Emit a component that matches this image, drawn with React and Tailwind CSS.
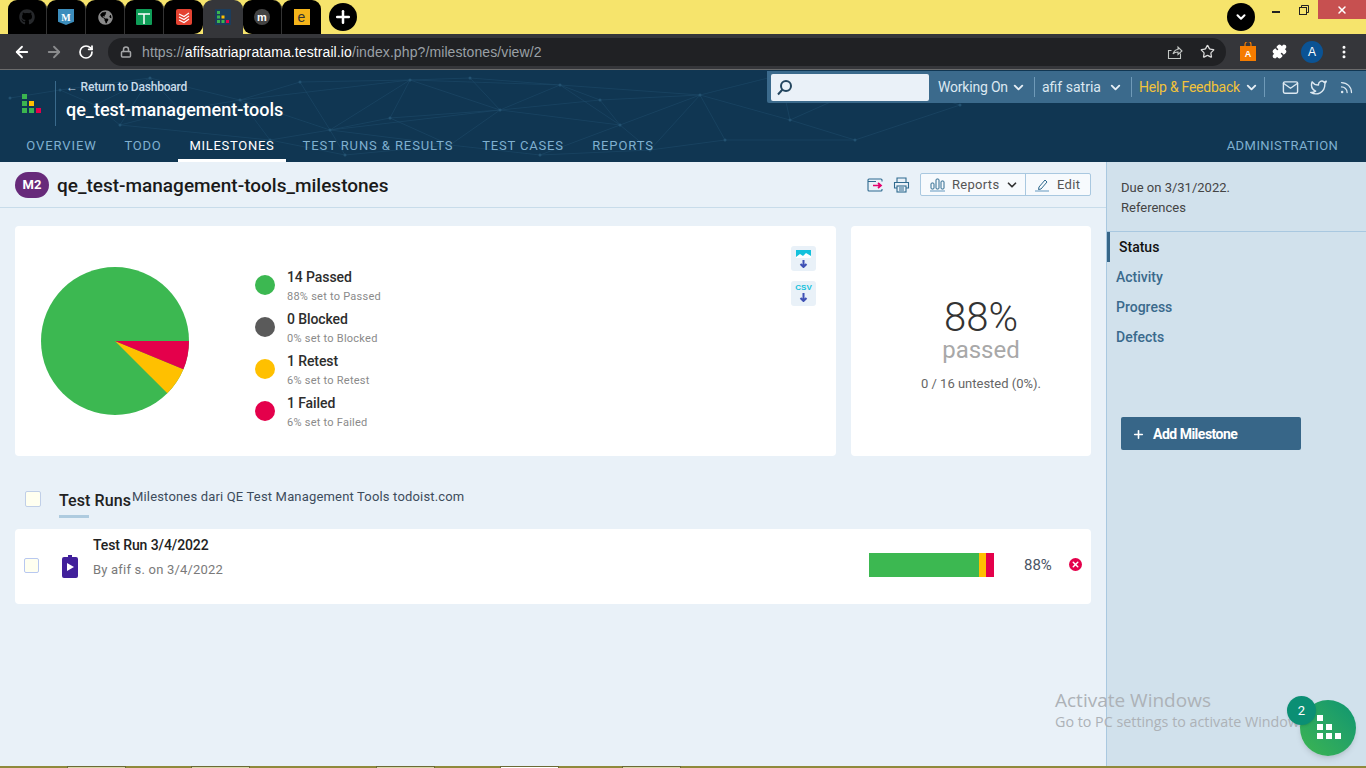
import React from "react";
import { ArrowLeft, ArrowRight, RotateCw, Lock, Star, MoreVertical, ChevronDown, Plus, X, Puzzle } from "lucide-react";
import { FaGithub, FaGlobeAmericas } from "react-icons/fa";
import { FiMail, FiTwitter, FiRss } from "react-icons/fi";

const font = "font-['Roboto',sans-serif]";

function TabShell({ children, className = "" }) {
  return <div className={`w-[39px] h-[34px] shrink-0 bg-black rounded-t-[9px] flex items-center justify-center ${className}`}>{children}</div>;
}

function TabStrip() {
  return (
    <div className="h-[34px] bg-[#f6e46c] flex items-center shrink-0">
      <div className="ml-[8px] flex h-[34px] shrink-0">
        <TabShell className="border-r border-[#333]"><FaGithub className="text-[#26282b]" size={16} /></TabShell>
        <TabShell className="border-r border-[#333]">
          <div className="w-[16px] h-[16px] bg-[#3c8dbc] [clip-path:polygon(0_0,100%_0,100%_80%,50%_100%,0_80%)] flex items-center justify-center text-white text-[10px] font-bold font-['Liberation_Serif',serif]">M</div>
        </TabShell>
        <TabShell className="border-r border-[#333]"><FaGlobeAmericas className="text-[#8a8a8a]" size={15} /></TabShell>
        <TabShell className="border-r border-[#333]">
          <svg width="16" height="16" viewBox="0 0 16 16"><rect width="16" height="16" rx="1" fill="#0f9d58" /><path d="M2 5h12M8 5v10" stroke="#fff" strokeWidth="1.5" /></svg>
        </TabShell>
        <TabShell className="rounded-br-[9px]">
          <svg width="16" height="16" viewBox="0 0 16 16"><rect width="16" height="16" rx="2" fill="#e44332" /><path d="M3 5l5 2.5L13 4M3 8l5 2.5L13 7M3 11l5 2.5L13 10" stroke="#fff" strokeWidth="1.1" fill="none" /></svg>
        </TabShell>
        <div className="w-[40px] h-[34px] shrink-0 bg-[#35363a] rounded-t-[9px] flex items-center justify-center">
          <svg width="16" height="16" viewBox="0 0 16 16"><rect width="16" height="16" fill="#1c3d5c" /><g fill="#3bb54f"><rect x="2" y="2" width="3" height="3" /><rect x="2" y="6.5" width="3" height="3" /><rect x="2" y="11" width="3" height="3" /><rect x="6.5" y="11" width="3" height="3" /></g><rect x="6.5" y="6.5" width="3" height="3" fill="#ffc000" /><rect x="11" y="11" width="3" height="3" fill="#e4004b" /></svg>
        </div>
        <TabShell className="rounded-bl-[9px] border-r border-[#333]">
          <div className="w-[16px] h-[16px] rounded-full bg-[#444] flex items-center justify-center text-white text-[11px] leading-none font-bold font-['Liberation_Sans',sans-serif]">m</div>
        </TabShell>
        <TabShell>
          <div className="w-[16px] h-[16px] bg-[#f4b41a] flex items-center justify-center text-[#333] text-[14px] leading-none font-['Liberation_Sans',sans-serif]">e</div>
        </TabShell>
      </div>
      <div className="ml-[8px] w-[28px] h-[28px] shrink-0 rounded-full bg-black flex items-center justify-center"><Plus size={20} strokeWidth={3} className="text-white" /></div>
      <div className="ml-[870px] w-[28px] h-[28px] shrink-0 rounded-full bg-black flex items-center justify-center"><ChevronDown size={14} strokeWidth={3.5} className="text-white" /></div>
      <div className="ml-[17px] w-[8px] h-[2px] shrink-0 mb-[10px] bg-[#222]" />
      <svg className="ml-[19px] mb-[14px] shrink-0" width="10" height="10" viewBox="0 0 10 10" fill="none" stroke="#222" strokeWidth="1"><rect x="0.5" y="2.5" width="7" height="7" /><path d="M2.5 2.5v-2h7v7h-2" /></svg>
      <div className="ml-[9px] self-start w-[48px] h-[19px] shrink-0 bg-[#c75050] flex items-center justify-center"><X size={12} strokeWidth={3} className="text-white" /></div>
    </div>
  );
}

function Toolbar() {
  return (
    <div className="h-[36px] bg-[#35363a] border-b border-[#6b6b6b] flex items-center shrink-0">
      <ArrowLeft size={18} strokeWidth={2.4} className="ml-[13px] text-white" />
      <ArrowRight size={18} strokeWidth={2.4} className="ml-[14px] text-[#8a8b8d]" />
      <RotateCw size={16} strokeWidth={2.6} className="ml-[15px] text-white" />
      <div className="ml-[14px] w-[1118px] h-[28px] rounded-full bg-[#202124] flex items-center">
        <Lock size={12} strokeWidth={3} className="ml-[12px] text-[#a5a6a8]" />
        <div className="ml-[10px] mt-[1px] text-[14px] tracking-[0.1px] text-[#9aa0a6] font-['Liberation_Sans',sans-serif]">https://<span className="text-white">afifsatriapratama.testrail.io</span>/index.php?/milestones/view/2</div>
        <svg className="ml-auto" width="16" height="16" viewBox="0 0 16 16" fill="none" stroke="#c4c7c5" strokeWidth="1.1"><path d="M13.5 9.5v5h-12v-8h3M6 10c1-3 3-4.5 5-4.5V3l4 4-4 3.5V8c-2 0-4 .6-5 2z" /></svg>
        <Star size={15} strokeWidth={2} className="ml-[17px] mr-[11px] text-[#dcdcdc]" />
      </div>
      <svg className="ml-[14px]" width="16" height="19" viewBox="0 0 16 19"><path d="M5 4V2.5a3 3 0 0 1 6 0V4" stroke="#f57c00" strokeWidth="1.2" fill="none" /><rect y="4" width="16" height="15" fill="#f57c00" /><text x="8" y="15" fontSize="9" fontWeight="700" fill="#fff" textAnchor="middle" fontFamily="Liberation Sans, sans-serif">A</text></svg>
      <Puzzle size={15} fill="#fff" className="ml-[16px] text-white" />
      <div className="ml-[14px] w-[22px] h-[22px] rounded-full bg-[#0b5394] flex items-center justify-center text-white text-[12px] font-['Liberation_Sans',sans-serif]">A</div>
      <MoreVertical size={16} strokeWidth={2.5} className="ml-[13px] text-white" />
    </div>
  );
}

const pts = [[10,28],[60,20],[150,8],[240,30],[330,60],[410,10],[500,40],[560,15],[620,55],[700,25],[790,50],[880,10],[960,35],[270,70],[120,55],[450,75],[650,80],[780,5],[345,85],[540,85],[855,70],[725,70],[180,40],[300,12],[390,48],[470,8],[600,30],[95,35]];
const links = [[0,1],[1,2],[2,3],[3,4],[4,5],[5,6],[6,7],[7,8],[8,9],[9,10],[10,11],[11,12],[3,13],[13,4],[2,14],[14,13],[4,15],[15,6],[6,8],[8,16],[16,9],[9,17],[17,10],[4,18],[18,15],[15,19],[19,8],[10,20],[20,12],[9,21],[21,16],[3,5],[5,7],[7,9],[4,6],[18,13],[19,16],[21,20],[22,2],[22,3],[22,14],[23,3],[23,5],[23,4],[24,4],[24,5],[24,6],[24,15],[25,5],[25,7],[25,6],[26,7],[26,8],[26,9],[26,6],[27,1],[27,14],[27,2]];

function Network() {
  return (
    <svg className="absolute inset-0 pointer-events-none" width="1366" height="92">
      {links.map(([a, b], i) => (
        <line key={i} x1={pts[a][0]} y1={pts[a][1]} x2={pts[b][0]} y2={pts[b][1]} stroke="#1f4d6c" strokeWidth="0.8" opacity="0.65" />
      ))}
      {pts.map(([x, y], i) => <circle key={i} cx={x} cy={y} r="1.5" fill="#235271" />)}
    </svg>
  );
}

function TopBar() {
  return (
    <div className="relative mt-[1px] w-[599px] h-[32px] bg-[#3b6a8c] rounded-bl-[2px] flex items-center text-[14px]">
      <div className="ml-[4px] w-[158px] h-[27px] bg-[#eaf1f8] rounded-[2px] flex items-center">
        <svg className="ml-[5px]" width="17" height="17" viewBox="0 0 17 17" fill="none" stroke="#24465f" strokeWidth="2"><circle cx="10" cy="7" r="5" /><path d="M6.5 10.5L2 15.5" /></svg>
      </div>
      <span className="ml-[9px] w-[70px] text-[#dce8f1] whitespace-nowrap -tracking-[0.2px]">Working On</span>
      <ChevronDown size={15} strokeWidth={3} className="ml-[3px] text-[#e6eef5]" />
      <div className="ml-[8px] w-px h-[20px] bg-[#6f9ab8]" />
      <span className="ml-[7px] w-[59px] text-[#dce8f1] whitespace-nowrap">afif satria</span>
      <ChevronDown size={15} strokeWidth={3} className="ml-[7px] text-[#e6eef5]" />
      <div className="ml-[8px] w-px h-[20px] bg-[#6f9ab8]" />
      <span className="ml-[7px] w-[102px] text-[#f2c33a] whitespace-nowrap -tracking-[0.25px]">Help &amp; Feedback</span>
      <ChevronDown size={15} strokeWidth={3} className="ml-[3px] text-[#e6eef5]" />
      <div className="ml-[5px] w-px h-[20px] bg-[#6f9ab8]" />
      <FiMail size={17} className="ml-[17px] text-[#dce8f1]" />
      <FiTwitter size={17} className="ml-[11px] text-[#dce8f1]" />
      <FiRss size={15} className="ml-[12px] text-[#dce8f1]" />
    </div>
  );
}

function NavTab({ children, className = "", active }) {
  return (
    <div className={`h-[32px] flex items-center justify-center whitespace-nowrap uppercase text-[13px] ${active ? "text-white border-b-[3px] border-white pt-[3px]" : "text-[#7fb0d0]"} ${className}`}>{children}</div>
  );
}

function Header() {
  return (
    <div className="relative h-[92px] bg-[#103652] flex flex-col shrink-0">
      <Network />
      <div className="relative h-[60px] flex items-start justify-between">
        <div className="flex items-start">
          <div className="ml-[22px] mt-[24px] grid grid-cols-3 gap-[2px] w-[19px]">
            <i className="w-[5px] h-[5px] bg-[#3bb54f]" /><i /><i />
            <i className="w-[5px] h-[5px] bg-[#3bb54f]" /><i className="w-[5px] h-[5px] bg-[#ffc000]" /><i />
            <i className="w-[5px] h-[5px] bg-[#3bb54f]" /><i className="w-[5px] h-[5px] bg-[#3bb54f]" /><i className="w-[5px] h-[5px] bg-[#e4004b]" />
          </div>
          <div className="ml-[14px] mt-[11px] w-px h-[45px] bg-[#3a6a8c]" />
          <div className="ml-[10px] mt-[9px]">
            <div className="text-[12px] leading-[16px] font-medium text-[#c9dcea] -tracking-[0.2px]">← Return to Dashboard</div>
            <div className="mt-[3px] text-[18px] leading-[24px] font-medium text-white whitespace-nowrap">qe_test-management-tools</div>
          </div>
        </div>
        <TopBar />
      </div>
      <div className="relative h-[32px] flex items-start pl-[15px]">
        <NavTab className="w-[93px] tracking-[0.9px]">Overview</NavTab>
        <NavTab className="ml-[6px] w-[58px] tracking-[0.7px]">Todo</NavTab>
        <NavTab className="ml-[6px] w-[108px] tracking-[0.7px]" active>Milestones</NavTab>
        <NavTab className="ml-[5px] w-[174px] tracking-[0.9px]">Test Runs &amp; Results</NavTab>
        <NavTab className="ml-[6px] w-[104px] tracking-[0.8px]">Test Cases</NavTab>
        <NavTab className="ml-[6px] w-[84px] tracking-[0.9px]">Reports</NavTab>
        <NavTab className="ml-auto mr-[28px] w-[111px] tracking-[0.45px]">Administration</NavTab>
      </div>
    </div>
  );
}

function PageTitle() {
  return (
    <div className="h-[46px] border-b border-[#c8dcea] flex items-center pl-[15px] pr-[15px]">
      <div className="w-[34px] h-[26px] rounded-[13px] bg-[#672a7a] text-white text-[13px] font-bold flex items-center justify-center">M2</div>
      <div className="ml-[8px] pt-[3px] text-[19px] font-medium text-[#1a1a1a] whitespace-nowrap">qe_test-management-tools_milestones</div>
      <svg className="ml-auto" width="16" height="14" viewBox="0 0 16 14" fill="none"><path d="M15 3.5V2a1 1 0 0 0-1-1H2a1 1 0 0 0-1 1v10a1 1 0 0 0 1 1h12a1 1 0 0 0 1-1v-1" stroke="#2f6a8f" strokeWidth="1.1" /><path d="M1 3.5h8" stroke="#2f6a8f" strokeWidth="1" /><path d="M6 7.5h8M11 5l3 2.5L11 10" stroke="#e4006e" strokeWidth="1.7" /></svg>
      <svg className="ml-[10px]" width="17" height="16" viewBox="0 0 17 16" fill="none" stroke="#2f6a8f" strokeWidth="1.1"><path d="M4 5V1h9v4M4 11H1.5V5.5h14V11H13" /><rect x="4" y="9" width="9" height="6" /><path d="M6 11h5M6 13h5" /></svg>
      <div className="ml-[10px] h-[23px] w-[171px] bg-[#f7fafd] border border-[#a9c8e0] rounded-[2px] flex items-center text-[13px] text-[#555] tracking-[0.3px]">
        <div className="w-[105px] h-full border-r border-[#a9c8e0] flex items-center">
          <svg className="ml-[9px]" width="15" height="14" viewBox="0 0 15 14" fill="none" stroke="#2f6a8f" strokeWidth="1"><rect x="1" y="5" width="3" height="6" rx="1" /><rect x="6" y="1" width="3" height="10" rx="1" /><rect x="11" y="3" width="3" height="8" rx="1" /><path d="M0 13h15" stroke="#8db4d0" strokeWidth="1.4" /></svg>
          <span className="ml-[7px]">Reports</span>
          <ChevronDown size={14} strokeWidth={3} className="ml-[6px] text-[#333]" />
        </div>
        <svg className="ml-[9px]" width="14" height="14" viewBox="0 0 14 14" fill="none" stroke="#2f6a8f" strokeWidth="1"><path d="M4 9l6-7 2 2-6 7-2.5.5z" /><path d="M0 13h14" stroke="#8db4d0" strokeWidth="1.4" /></svg>
        <span className="ml-[8px]">Edit</span>
      </div>
    </div>
  );
}

function Pie() {
  return (
    <svg className="ml-[26px] shrink-0" width="148" height="148" viewBox="-74 -74 148 148">
      <circle r="74" fill="#3cb851" />
      <path d="M0 0L68.4 28.3A74 74 0 0 1 52.3 52.3Z" fill="#ffc000" />
      <path d="M0 0L74 0A74 74 0 0 1 68.4 28.3Z" fill="#e4004b" />
    </svg>
  );
}

function Legend({ color, title, sub }) {
  return (
    <div className="h-[42px] flex items-center">
      <div className={`w-[20px] h-[20px] rounded-full ${color}`} />
      <div className="ml-[12px] pt-[1px]">
        <div className="text-[14px] leading-[20px] font-medium text-[#2d2d2d] -tracking-[0.1px] mb-[2px]">{title}</div>
        <div className="text-[11px] leading-[16px] text-[#8a8a8a] tracking-[0.25px]">{sub}</div>
      </div>
    </div>
  );
}

function Cards() {
  return (
    <div className="mt-[18px] mx-[15px] h-[230px] flex gap-[15px]">
      <div className="relative w-[821px] bg-white rounded-[4px] flex items-center">
        <Pie />
        <div className="ml-[66px] self-start mt-[38px]">
          <Legend color="bg-[#3cb851]" title="14 Passed" sub="88% set to Passed" />
          <Legend color="bg-[#5a5a5a]" title="0 Blocked" sub="0% set to Blocked" />
          <Legend color="bg-[#ffc000]" title="1 Retest" sub="6% set to Retest" />
          <Legend color="bg-[#e4004b]" title="1 Failed" sub="6% set to Failed" />
        </div>
        <div className="ml-auto mr-[20px] self-start mt-[20px] flex flex-col gap-[10px]">
          <div className="w-[25px] h-[25px] bg-[#e9f1f8] rounded-[3px] flex flex-col items-center pt-[4px]">
            <svg width="15" height="18" viewBox="0 0 15 18"><rect width="15" height="8" fill="#14c1dc" /><path d="M0 7l4-3 3 2 3-3 5 3v2H0z" fill="#fff" /><path d="M7.5 10v7M4.5 14l3 3 3-3" stroke="#3f51b5" strokeWidth="2" fill="none" /></svg>
          </div>
          <div className="w-[25px] h-[25px] bg-[#e9f1f8] rounded-[3px] flex flex-col items-center pt-[2px]">
            <span className="text-[8px] leading-[10px] font-bold text-[#14c1dc] font-['Liberation_Sans',sans-serif]">CSV</span>
            <svg width="15" height="9" viewBox="0 0 15 9"><path d="M7.5 0v8M4.5 5l3 3 3-3" stroke="#3f51b5" strokeWidth="2" fill="none" /></svg>
          </div>
        </div>
      </div>
      <div className="w-[240px] bg-white rounded-[4px] flex flex-col items-center pl-[20px] pt-[74px]">
        <div className="text-[40px] leading-[36px] font-light text-[#333]">88%</div>
        <div className="text-[24px] leading-[28px] text-[#a8a8a8]">passed</div>
        <div className="text-[13px] leading-[20px] text-[#666] mt-[10px]">0 / 16 untested (0%).</div>
      </div>
    </div>
  );
}

function RunsHeader() {
  return (
    <div className="h-[73px] ml-[25px] pt-[30px] flex items-start">
      <div className="mt-[5px] w-[16px] h-[16px] bg-[#fffff0] border border-[#c0cfe8] rounded-[2px]" />
      <div className="ml-[18px] pt-[3px] w-[73px]">
        <div className="text-[16px] leading-[24px] font-medium text-[#222] whitespace-nowrap tracking-[0.1px]">Test Runs</div>
        <div className="mt-[2px] w-[30px] h-[3px] bg-[#aecbdf]" />
      </div>
      <div className="mt-[1px] text-[13px] leading-[20px] text-[#3d4c5c] whitespace-nowrap tracking-[0.17px]">Milestones dari QE Test Management Tools todoist.com</div>
    </div>
  );
}

function RunRow() {
  return (
    <div className="mx-[15px] h-[75px] bg-white rounded-[4px] flex">
      <div className="ml-[9px] mt-[29px] w-[15px] h-[15px] bg-[#fffff0] border border-[#b8c8f0] rounded-[2px]" />
      <svg className="ml-[23px] mt-[26px]" width="16" height="23" viewBox="0 0 16 23"><path d="M4 2h2V0h4v2h2l0 0h2a2 2 0 0 1 2 2v17a2 2 0 0 1-2 2H2a2 2 0 0 1-2-2V4a2 2 0 0 1 2-2z" fill="#41209b" /><path d="M5 8l7 4-7 4z" fill="#fff" /></svg>
      <div className="ml-[15px] pt-[6px]">
        <div className="text-[14px] leading-[20px] font-medium text-[#222] -tracking-[0.1px]">Test Run 3/4/2022</div>
        <div className="mt-[5px] text-[13px] leading-[20px] text-[#7a7a7a] tracking-[0.2px]">By afif s. on 3/4/2022</div>
      </div>
      <div className="ml-auto mt-[24px] w-[125px] h-[24px] flex">
        <div className="w-[110px] bg-[#3cb851]" />
        <div className="w-[7px] bg-[#ffc000]" />
        <div className="w-[8px] bg-[#e4004b]" />
      </div>
      <div className="ml-[30px] w-[30px] mt-[26px] text-[15px] leading-[20px] text-[#4a5565]">88%</div>
      <div className="ml-[15px] mr-[9px] mt-[29px] w-[13px] h-[13px] rounded-full bg-[#e4004b] flex items-center justify-center"><X size={9} strokeWidth={4} className="text-white" /></div>
    </div>
  );
}

function Aside() {
  const item = "h-[30px] flex items-center pl-[9px] text-[14px] font-medium text-[#3a6a8c]";
  return (
    <div className="w-[260px] bg-[#d1e1ec] border-l border-[#a9c8e0]">
      <div className="h-[70px] pl-[14px] pt-[16px] border-b border-[#a9c8e0] text-[13px] leading-[20px] text-[#444]">
        <div>Due on 3/31/2022.</div>
        <div>References</div>
      </div>
      <div className="h-[30px] flex items-center border-l-[3px] border-[#376688] pl-[9px] text-[14px] font-medium text-[#111]">Status</div>
      <div className={item}>Activity</div>
      <div className={item}>Progress</div>
      <div className={item}>Defects</div>
      <div className="ml-[14px] mt-[65px] w-[180px] h-[33px] pt-[1px] bg-[#376688] rounded-[2px] flex items-center text-white text-[14px] font-bold -tracking-[0.5px]">
        <Plus size={13} strokeWidth={3} className="ml-[11px]" />
        <span className="ml-[8px]">Add Milestone</span>
      </div>
    </div>
  );
}

function BottomStrip() {
  const seg = "w-[59px] h-[2px] border-t border-x border-[#6b6a35]";
  return (
    <div className="h-[2px] bg-[#8f8a3c] flex shrink-0">
      <div className={`ml-[67px] ${seg} bg-[#d8d6a8]`} />
      <div className={`ml-[65px] ${seg} bg-[#d8d6a8]`} />
      <div className={`ml-[126px] ${seg} bg-[#d8d6a8]`} />
      <div className={`ml-[65px] ${seg} bg-white`} />
      <div className={`ml-[63px] ${seg} bg-[#d8d6a8]`} />
    </div>
  );
}

export default function App() {
  return (
    <div className={`relative w-[1366px] h-[768px] overflow-hidden flex flex-col bg-[#e9f1f8] ${font}`}>
      <TabStrip />
      <Toolbar />
      <Header />
      <div className="flex flex-1 min-h-0">
        <div className="w-[1106px]">
          <PageTitle />
          <Cards />
          <RunsHeader />
          <RunRow />
        </div>
        <Aside />
      </div>
      <BottomStrip />

      <div className="absolute left-[1055px] top-[688px] pointer-events-none font-['Open_Sans',sans-serif] text-[#adb2b7] whitespace-nowrap">
        <div className="text-[19px] leading-[24px]">Activate Windows</div>
        <div className="text-[14.3px] leading-[20px]">Go to PC settings to activate Windows.</div>
      </div>
      <div className="absolute left-[1300px] top-[700px] w-[56px] h-[56px] rounded-full bg-gradient-to-tr from-[#3cb54f] to-[#0b9570] shadow-md">
        <div className="absolute left-[17px] top-[15px] grid grid-cols-3 gap-[3px] w-[24px]">
          <i className="w-[6px] h-[6px] bg-white" /><i /><i />
          <i className="w-[6px] h-[6px] bg-white" /><i className="w-[6px] h-[6px] bg-white" /><i />
          <i className="w-[6px] h-[6px] bg-white" /><i className="w-[6px] h-[6px] bg-white" /><i className="w-[6px] h-[6px] bg-white" />
        </div>
      </div>
      <div className="absolute left-[1287px] top-[696px] w-[29px] h-[29px] rounded-full bg-[#0b8f74] text-white text-[13px] flex items-center justify-center shadow">2</div>
    </div>
  );
}
